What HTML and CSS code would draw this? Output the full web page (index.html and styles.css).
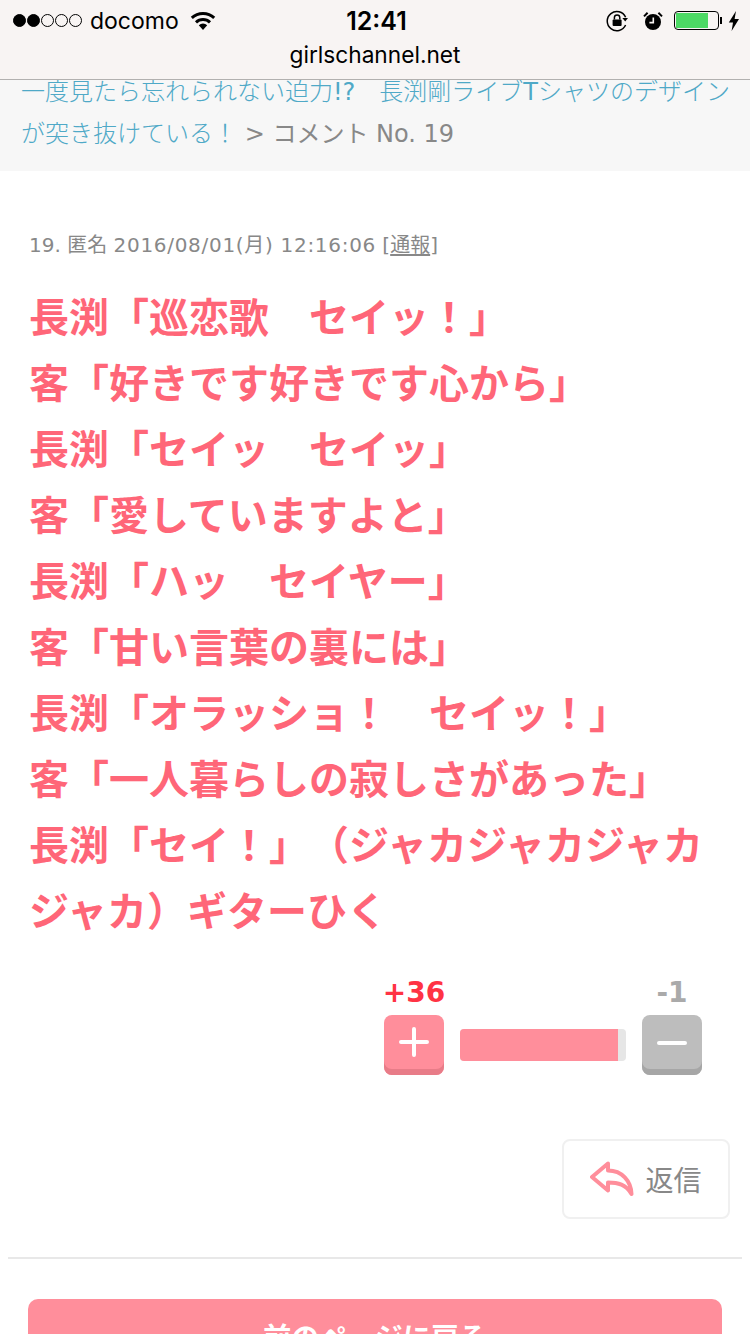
FILE: index.html
```html
<!DOCTYPE html>
<html lang="ja">
<head>
<meta charset="utf-8">
<title>girlschannel.net</title>
<link rel="stylesheet" href="styles.css">
</head>
<body>
<header class="chrome">
  <div class="status">
    <div class="status-left">
      <span class="signal"><i class="dot on"></i><i class="dot on"></i><i class="dot"></i><i class="dot"></i><i class="dot"></i></span>
      <span class="carrier">docomo</span>
      <svg class="wifi" width="26" height="20" viewBox="0 0 26 20"><path d="M13 19 8.800 14.200a6.200 6.200 0 0 1 8.400 0Z" fill="#000"/><path d="M6 11.300a10.200 10.200 0 0 1 14 0" fill="none" stroke="#000" stroke-width="3"/><path d="M1.800 6.800a16.400 16.400 0 0 1 22.400 0" fill="none" stroke="#000" stroke-width="3"/></svg>
    </div>
    <div class="time">12:41</div>
    <div class="status-right">
      <svg class="rot" width="24" height="22" viewBox="0 0 24 22"><path d="M19.600 7.200A9.600 9.600 0 1 0 19.600 15" fill="none" stroke="#000" stroke-width="1.500"/><path d="m16.400 8 5.600 0-2.800 3.400Z" fill="#000"/><rect x="6.600" y="9.400" width="9" height="6.600" rx="1" fill="#000"/><path d="M8.400 9.600V7.600a2.700 2.700 0 0 1 5.400 0v2" fill="none" stroke="#000" stroke-width="1.500"/></svg>
      <svg class="alarm" width="20" height="20" viewBox="0 0 20 20"><circle cx="10" cy="11" r="8" fill="#000"/><path d="M1 5.400 4.600 1.800M19 5.400l-3.600-3.600" stroke="#000" stroke-width="2"/><path d="M10.300 6.400V11.600H6.400" fill="none" stroke="#f8f3f2" stroke-width="1.600"/></svg>
      <span class="battery"><span class="battery-fill"></span></span>
      <svg class="bolt" width="12" height="20" viewBox="0 0 12 20"><path d="M8 0 .8 11.400H5L3.600 20 11 8H6.600Z" fill="#000"/></svg>
    </div>
  </div>
  <div class="url">girlschannel.net</div>
</header>

<nav class="crumb"><a class="crumb-link">一度見たら忘れられない迫力<span class="latin">!?</span>　長渕剛ライブ<span class="latin">T</span>シャツのデザインが突き抜けている！</a> <span class="crumb-tail">&gt; コメント No. 19</span></nav>

<main class="comment">
  <p class="meta">19. 匿名 <span class="stamp">2016/08/01(月) 12:16:06</span> [<u>通報</u>]</p>
  <p class="body-text">長渕「巡恋歌　セイッ！」<br>客「好きです好きです心から」<br>長渕「セイッ　セイッ」<br>客「愛していますよと」<br>長渕「ハッ　セイヤー」<br>客「甘い言葉の裏には」<br>長渕「オラッショ！　セイッ！」<br>客「一人暮らしの寂しさがあった」<br>長渕「セイ！」（ジャカジャカジャカジャカ）ギターひく</p>

  <div class="votes">
    <div class="vote">
      <span class="count plus">+36</span>
      <span class="vote-btn plus-btn"><svg width="30" height="30" viewBox="0 0 30 30"><path d="M15 2v26M2 15h26" stroke="#fff" stroke-width="4" stroke-linecap="round"/></svg></span>
    </div>
    <div class="meter"><div class="meter-fill"></div></div>
    <div class="vote">
      <span class="count minus">-1</span>
      <span class="vote-btn minus-btn"><svg width="30" height="30" viewBox="0 0 30 30"><path d="M2 16h26" stroke="#fff" stroke-width="4" stroke-linecap="round"/></svg></span>
    </div>
  </div>

  <div class="reply-row">
    <a class="reply">
      <svg width="44" height="36" viewBox="0 0 44 36"><path d="M18 2.500 2 16l16 13.500V21.500c10 0 18 2 23.500 11.500C41 20 32 9.500 18 9.500Z" fill="none" stroke="#ff8e9b" stroke-width="4" stroke-linejoin="round"/></svg>
      <span>返信</span>
    </a>
  </div>
</main>

<hr class="rule">
<div class="back-wrap"><a class="back">前のページに戻る</a></div>
</body>
</html>
```

FILE: styles.css
```css
* { box-sizing: border-box; }
html, body { margin: 0; padding: 0; }
body {
  width: 750px;
  height: 1334px;
  overflow: hidden;
  position: relative;
  background: #fff;
  font-family: "DejaVu Sans", "Noto Sans CJK JP", sans-serif;
  text-spacing-trim: space-all;
}
.chrome {
  position: absolute;
  top: 0;
  left: 0;
  width: 750px;
  height: 80px;
  background: #f8f4f3;
  border-bottom: 1px solid #b2b0af;
  font-family: Inter, "Liberation Sans", sans-serif;
  color: #000;
}
.status {
  height: 41px;
  display: grid;
  grid-template-columns: 1fr auto 1fr;
  align-items: center;
  padding: 0 10px 0 13px;
}
.status-left { display: flex; align-items: center; }
.signal { display: flex; gap: 1px; margin-right: 8px; }
.dot { width: 13px; height: 13px; border-radius: 50%; border: 1px solid #000; }
.dot.on { background: #000; }
.carrier { font-size: 23px; margin-right: 11px; }
.wifi { display: block; }
.time { font-size: 25px; font-weight: 600; }
.status-right { display: flex; align-items: center; justify-content: flex-end; }
.rot { margin-right: 13px; }
.alarm { margin-right: 11px; }
.battery {
  width: 45px;
  height: 19px;
  border: 1px solid #000;
  border-radius: 4px;
  padding: 1px;
  margin-right: 9px;
  display: block;
  position: relative;
}
.battery::after {
  content: "";
  position: absolute;
  right: -4px;
  top: 5px;
  width: 2px;
  height: 7px;
  background: #000;
}
.battery-fill { display: block; width: 32px; height: 15px; background: #4cd964; }
.url { text-align: center; font-size: 22.7px; line-height: 28px; }
.crumb {
  padding: 71px 10px 16px 21px;
  background: #f7f7f7;
  font-size: 24px;
  line-height: 42px;
  height: 171px;
  color: #888;
}
.crumb-link { color: #4fa9c7; font-weight: 300; }
.latin { font-weight: 400; }
.crumb-tail { font-weight: 400; }
.comment { padding: 0 20px 0 29px; }
.meta {
  margin: 60px 0 0;
  font-size: 20px;
  line-height: 28px;
  color: #888;
}
.stamp { letter-spacing: .7px; }
.meta u { text-underline-offset: 2px; }
.body-text {
  margin: 26px 0 0;
  font-size: 40px;
  line-height: 66px;
  font-weight: 700;
  color: #ff6678;
}
.votes {
  display: flex;
  justify-content: flex-end;
  align-items: flex-end;
  gap: 16px;
  margin: 30px 28px 0 0;
}
.vote { display: flex; flex-direction: column; align-items: center; width: 60px; }
.count { font-size: 28px; font-weight: 700; line-height: 36px; padding-bottom: 4px; }
.count.plus { color: #ff3344; white-space: nowrap; }
.count.minus { color: #aaa; }
.vote-btn {
  width: 60px;
  height: 60px;
  border-radius: 8px;
  display: flex;
  align-items: center;
  justify-content: center;
  padding-bottom: 6px;
}
.plus-btn { background: #ff8e9b; box-shadow: inset 0 -6px 0 #e87c88; }
.minus-btn { background: #bdbdbd; box-shadow: inset 0 -6px 0 #a6a6a6; }
.meter {
  width: 166px;
  height: 32px;
  margin-bottom: 14px;
  background: #e6e6e6;
  border-radius: 4px;
  overflow: hidden;
}
.meter-fill { width: 158px; height: 100%; background: #ff8e9b; }
.reply-row { display: flex; justify-content: flex-end; margin-top: 64px; }
.reply {
  width: 168px;
  height: 80px;
  border: 2px solid #f0f0f0;
  border-radius: 8px;
  display: flex;
  align-items: center;
  justify-content: center;
  gap: 11px;
  font-size: 28px;
  color: #888;
}
.rule {
  margin: 38px 8px 0;
  border: 0;
  height: 2px;
  background: #e8e8e8;
}
.back-wrap { padding: 40px 28px 0; }
.back {
  display: block;
  height: 80px;
  border-radius: 10px;
  background: #ff8e9b;
  color: #fff;
  font-size: 28px;
  font-weight: 700;
  text-align: center;
  line-height: 80px;
}
```
